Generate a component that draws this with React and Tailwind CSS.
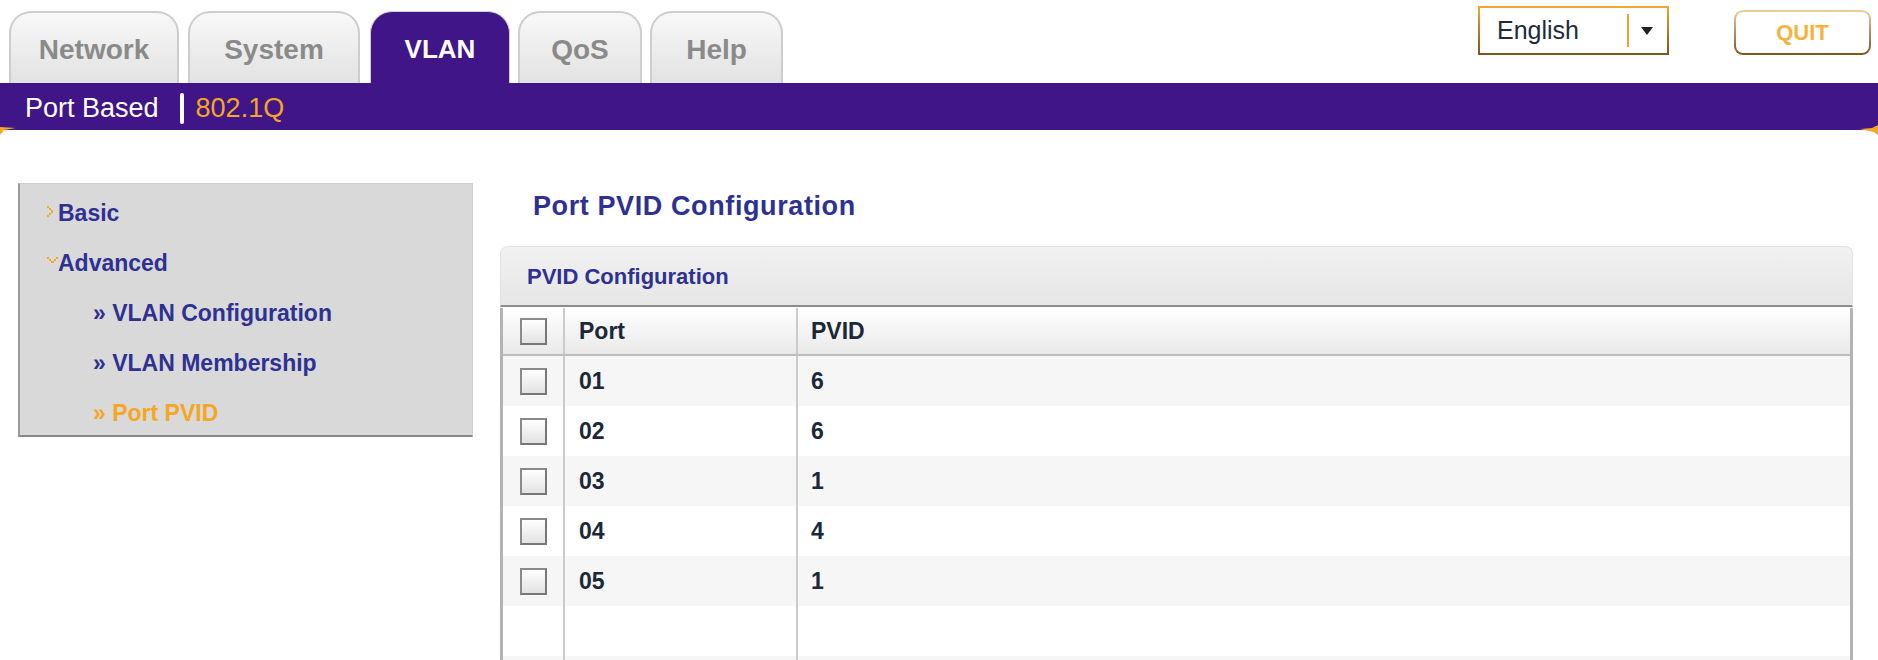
import React from "react";

const FONT = { fontFamily: '"Liberation Sans", Arial, sans-serif' };

function Tab({ label, width, active, className = "" }) {
  if (active) {
    return (
      <div
        className={`h-[72px] rounded-t-[22px] border-x border-t border-[#cfcfcf] bg-[#3f1587] flex items-center justify-center pt-[4px] text-[26px] font-bold text-white ${className}`}
        style={{ width }}
      >
        {label}
      </div>
    );
  }
  return (
    <div
      className={`h-[72px] rounded-t-[22px] border-x-2 border-t-2 border-[#cdcdcd] bg-gradient-to-b from-[#f8f8f8] to-[#e2e2e2] flex items-center justify-center pt-[4px] text-[28px] font-bold text-[#8a8a8a] ${className}`}
      style={{ width }}
    >
      {label}
    </div>
  );
}

function Checkbox() {
  return (
    <div className="w-[27px] h-[27px] border-2 border-[#777] border-t-[#8a8a8a] border-l-[#8a8a8a] bg-gradient-to-b from-[#ffffff] to-[#e2e2e2]" />
  );
}

function ArrowRight() {
  return (
    <svg width="7" height="11" viewBox="0 0 7 11" className="shrink-0">
      <rect x="0" y="0" width="2" height="2" fill="#f5a623" />
      <rect x="2" y="2" width="2" height="2" fill="#f5a623" />
      <rect x="4" y="4" width="2" height="3" fill="#f5a623" />
      <rect x="2" y="7" width="2" height="2" fill="#f5a623" />
      <rect x="0" y="9" width="2" height="2" fill="#f5a623" />
    </svg>
  );
}

function ArrowDown() {
  return (
    <svg width="11" height="7" viewBox="0 0 11 7" className="shrink-0">
      <rect x="0" y="0" width="2" height="2" fill="#f5a623" />
      <rect x="2" y="2" width="2" height="2" fill="#f5a623" />
      <rect x="4" y="4" width="3" height="2" fill="#f5a623" />
      <rect x="7" y="2" width="2" height="2" fill="#f5a623" />
      <rect x="9" y="0" width="2" height="2" fill="#f5a623" />
    </svg>
  );
}

const rows = [
  { port: "01", pvid: "6" },
  { port: "02", pvid: "6" },
  { port: "03", pvid: "1" },
  { port: "04", pvid: "4" },
  { port: "05", pvid: "1" },
];

export default function App() {
  return (
    <div className="w-[1878px] h-[660px] overflow-hidden bg-white relative" style={FONT}>
      {/* Top header */}
      <div className="flex h-[83px]">
        <div className="flex items-end pl-[9px] h-[83px]">
          <Tab label="Network" width={170} />
          <Tab label="System" width={172} className="ml-[9px]" />
          <Tab label="VLAN" width={140} active className="ml-[10px]" />
          <Tab label="QoS" width={124} className="ml-[8px]" />
          <Tab label="Help" width={133} className="ml-[8px]" />
        </div>
        <div className="ml-auto flex items-start pt-[6px] pr-[7px]">
          <div className="w-[191px] h-[49px] p-[2px] bg-gradient-to-b from-[#f4a732] to-[#7d5418]">
            <div className="w-full h-full bg-white flex items-center">
              <span className="pl-[17px] text-[25px] text-[#1e2a3a] w-[147px]">English</span>
              <div className="w-[2px] h-[33px] bg-[#f0a030]" />
              <svg width="12" height="8" viewBox="0 0 12 8" className="ml-[12px]">
                <polygon points="0,0 12,0 6,8" fill="#222" />
              </svg>
            </div>
          </div>
          <div className="ml-[65px] mt-[4px] w-[137px] h-[45px] rounded-[9px] p-[2px] bg-gradient-to-b from-[#ecd09a] to-[#7d5418]">
            <div className="w-full h-full rounded-[7px] bg-white flex items-center justify-center text-[22px] font-bold text-[#f7b23b]">
              QUIT
            </div>
          </div>
        </div>
      </div>

      {/* Purple bar */}
      <div className="relative h-[47px] bg-[#3f1587] flex items-center pl-[25px] pt-[3px]">
        <span className="text-[27px] text-white">Port Based</span>
        <div className="ml-[21px] w-[4px] h-[31px] rounded-[2px] bg-white" />
        <span className="ml-[12px] text-[27px] text-[#f5a623]">802.1Q</span>
        <svg className="absolute left-0 top-[44px]" width="16" height="8" viewBox="0 0 16 8">
          <polygon points="0,0 16,1 4,3 0,8" fill="#f5a623" />
        </svg>
        <svg className="absolute right-0 top-[42px]" width="18" height="10" viewBox="0 0 18 10">
          <polygon points="18,0 18,10 14,7 0,4 12,3" fill="#f5a623" />
        </svg>
      </div>

      {/* Main */}
      <div className="flex">
        {/* Sidebar */}
        <div className="ml-[18px] mt-[53px] w-[455px] h-[254px] bg-[#d9d9d9] border-t border-r border-[#cfcfcf] border-l-2 border-b-2 border-l-[#9a9a9a] border-b-[#888] pt-[3px] text-[23px] font-bold">
          <div className="h-[50px] flex items-center pl-[27px] pt-[2px]">
            <div className="self-start mt-[17px]"><ArrowRight /></div>
            <span className="ml-[4px] text-[#2e3192]">Basic</span>
          </div>
          <div className="h-[50px] flex items-center pl-[27px] pt-[2px]">
            <div className="self-start mt-[18px]"><ArrowDown /></div>
            <span className="text-[#2e3192]">Advanced</span>
          </div>
          <div className="h-[50px] flex items-center pl-[73px] pt-[2px] text-[#2e3192]">» VLAN Configuration</div>
          <div className="h-[50px] flex items-center pl-[73px] pt-[2px] text-[#2e3192]">» VLAN Membership</div>
          <div className="h-[50px] flex items-center pl-[73px] pt-[2px] text-[#f5a623]">» Port PVID</div>
        </div>

        {/* Content */}
        <div className="ml-[27px] w-[1353px]">
          <div className="mt-[61px] h-[55px] pl-[33px] text-[27px] leading-[31px] font-bold tracking-[0.6px] text-[#2e3192]">
            Port PVID Configuration
          </div>
          <div className="h-[61px] rounded-t-[8px] border-x border-t border-[#e2e2e2] bg-gradient-to-b from-[#f1f1f1] to-[#e6e6e6] border-b-2 border-b-[#8c8c8c] flex items-center pl-[26px] text-[22px] font-bold text-[#2e3192]">
            PVID Configuration
          </div>
          <div className="border-x-[3px] border-[#b3b3b3] mt-[1px] text-[23px] font-bold text-[#1b2838]">
            <div className="grid grid-cols-[62px_233px_1fr] h-[48px] bg-gradient-to-b from-[#ffffff] to-[#e9e9e9] border-b-2 border-[#bdbdbd]">
              <div className="flex items-center justify-center border-r-2 border-[#cbcbcb]"><Checkbox /></div>
              <div className="flex items-center pl-[14px] border-r-2 border-[#cbcbcb]">Port</div>
              <div className="flex items-center pl-[13px]">PVID</div>
            </div>
            {rows.map((r, i) => (
              <div key={r.port} className={`grid grid-cols-[62px_233px_1fr] h-[50px] ${i % 2 === 0 ? "bg-[#f6f6f6]" : "bg-white"}`}>
                <div className="flex items-center justify-center border-r-2 border-[#cbcbcb]"><Checkbox /></div>
                <div className="flex items-center pl-[14px] border-r-2 border-[#cbcbcb]">{r.port}</div>
                <div className="flex items-center pl-[13px]">{r.pvid}</div>
              </div>
            ))}
            <div className="grid grid-cols-[62px_233px_1fr] h-[50px] bg-white">
              <div className="border-r-2 border-[#cbcbcb]" />
              <div className="border-r-2 border-[#cbcbcb]" />
              <div />
            </div>
            <div className="grid grid-cols-[62px_233px_1fr] h-[50px] bg-[#f6f6f6]">
              <div className="border-r-2 border-[#cbcbcb]" />
              <div className="border-r-2 border-[#cbcbcb]" />
              <div />
            </div>
          </div>
        </div>
      </div>
    </div>
  );
}
